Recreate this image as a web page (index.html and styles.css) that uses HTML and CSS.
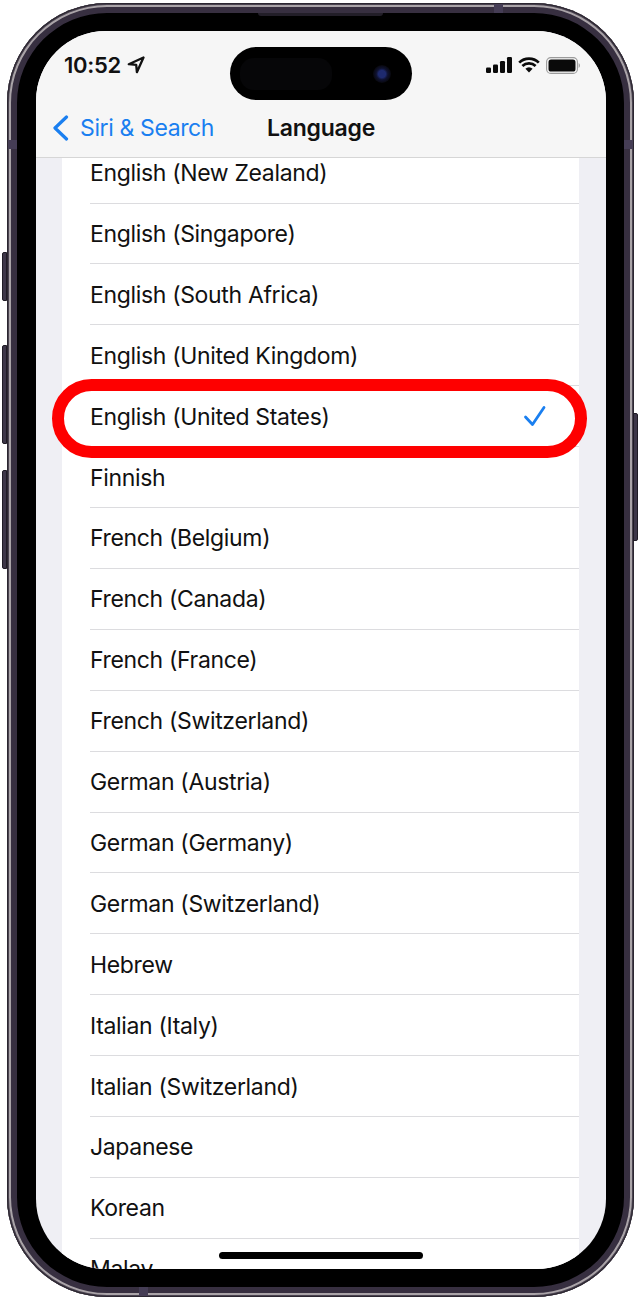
FILE: index.html
```html
<!DOCTYPE html>
<html lang="en">
<head>
<meta charset="utf-8">
<title>Language</title>
<link rel="stylesheet" href="styles.css">
</head>
<body>
<div class="phone">
  <span class="btn btn-silent"></span>
  <span class="btn btn-up"></span>
  <span class="btn btn-down"></span>
  <span class="btn btn-power"></span>
  <span class="speaker"></span>
  <span class="band band-top"></span>
  <span class="band band-bottom"></span>
  <span class="band band-left"></span>
  <span class="band band-right"></span>
  <div class="screen">
    <header class="header">
      <div class="status">
        <div class="status-left">
          <span class="time">10:52</span>
          <svg class="loc" width="18" height="18" viewBox="0 0 18 18"><path d="M16.500 1.500 1.800 8.200l7.400.6.7 7.400z" fill="none" stroke="#111" stroke-width="2.300" stroke-linejoin="round"/></svg>
        </div>
        <div class="status-right">
          <svg width="26" height="16" viewBox="0 0 26 16"><rect x="0" y="10.500" width="5" height="5.500" rx="1.200" fill="#0a0a0a"/><rect x="7" y="7.500" width="5" height="8.500" rx="1.200" fill="#0a0a0a"/><rect x="14" y="4" width="5" height="12" rx="1.200" fill="#0a0a0a"/><rect x="21" y="0" width="5" height="16" rx="1.200" fill="#0a0a0a"/></svg>
          <svg width="22" height="16" viewBox="0 0 22 16"><path d="M1.200 5.600a14 14 0 0 1 19.600 0M4.400 9a9.400 9.400 0 0 1 13.200 0" fill="none" stroke="#0a0a0a" stroke-width="2.700"/><path d="M7.400 11.800a5 5 0 0 1 7.200 0L11 15.600z" fill="#0a0a0a"/></svg>
          <svg width="34" height="17" viewBox="0 0 34 17"><rect x=".6" y=".6" width="30.800" height="15.800" rx="4.200" fill="none" stroke="#9b9b9b" stroke-width="1.100"/><rect x="2.500" y="2.500" width="27" height="12" rx="2.600" fill="#0a0a0a"/><path d="M32.600 6v5c.9-.4 1.400-1.400 1.400-2.500S33.500 6.400 32.600 6z" fill="#a5a5a5"/></svg>
        </div>
      </div>
      <nav class="nav">
        <a class="back">
          <svg width="17" height="26" viewBox="0 0 17 26"><path d="M13.500 2 2 13l11.500 11" fill="none" stroke="#1a7ff0" stroke-width="3.200" stroke-linecap="round" stroke-linejoin="round"/></svg>
          <span>Siri &amp; Search</span>
        </a>
        <h1 class="title">Language</h1>
        <span></span>
      </nav>
    </header>
    <div class="island"><span class="lens-dark"></span><span class="camera"></span></div>
    <main class="list">
      <ul class="card">
        <li class="row">English (New Zealand)</li>
        <li class="row">English (Singapore)</li>
        <li class="row">English (South Africa)</li>
        <li class="row">English (United Kingdom)</li>
        <li class="row">English (United States)
          <svg class="check" width="24" height="23" viewBox="0 0 24 23"><path d="M2.500 12 9.500 19.500 21 2.500" fill="none" stroke="#1a7ff0" stroke-width="2.800" stroke-linecap="round" stroke-linejoin="round"/></svg>
        </li>
        <li class="row">Finnish</li>
        <li class="row">French (Belgium)</li>
        <li class="row">French (Canada)</li>
        <li class="row">French (France)</li>
        <li class="row">French (Switzerland)</li>
        <li class="row">German (Austria)</li>
        <li class="row">German (Germany)</li>
        <li class="row">German (Switzerland)</li>
        <li class="row">Hebrew</li>
        <li class="row">Italian (Italy)</li>
        <li class="row">Italian (Switzerland)</li>
        <li class="row">Japanese</li>
        <li class="row">Korean</li>
        <li class="row">Malay</li>
      </ul>
    </main>
    <span class="home"></span>
  </div>
  <div class="ring"></div>
</div>
</body>
</html>
```
FILE: styles.css
```css
* { box-sizing: border-box; }
html, body { margin: 0; padding: 0; background: #fff; }
body {
  width: 642px;
  height: 1301px;
  overflow: hidden;
  padding: 3px 0 0 7px;
  font-family: Inter, "Liberation Sans", sans-serif;
  color: #111;
}
.phone {
  position: relative;
  width: 627px;
  height: 1294px;
  padding: 28px 28px 28px 29px;
  background: #000;
  border-radius: 100px;
  box-shadow:
    inset 0 0 0 1px #2b2630,
    inset 0 0 0 2px #4a4350,
    inset 0 0 0 4px #aaa4a8,
    inset 0 0 0 10px #372f40;
}
.btn {
  position: absolute;
  width: 5px;
  background: #3d3648;
  border: 1px solid #1f1b25;
  border-radius: 2px 0 0 2px;
}
.btn-silent { left: -5px; top: 249px; height: 49px; }
.btn-up { left: -5px; top: 342px; height: 99px; }
.btn-down { left: -5px; top: 467px; height: 99px; }
.btn-power { right: -4px; top: 410px; height: 128px; border-radius: 0 2px 2px 0; }
.speaker {
  position: absolute;
  left: 251px;
  top: 10px;
  width: 125px;
  height: 3px;
  background: #221e28;
  border-radius: 0 0 3px 3px;
}
.band { position: absolute; background: #453d55; }
.band-top { left: 487px; top: 1px; width: 9px; height: 9px; }
.band-bottom { left: 132px; bottom: 1px; width: 9px; height: 9px; }
.band-left { left: 1px; top: 137px; width: 9px; height: 9px; }
.band-right { right: 1px; top: 137px; width: 9px; height: 9px; }
.screen {
  position: relative;
  display: flex;
  flex-direction: column;
  width: 570px;
  height: 1238px;
  overflow: hidden;
  background: #efeff4;
  border-radius: 70px;
}
.header {
  flex: none;
  height: 127px;
  background: #f6f6f6;
  border-bottom: 1px solid #d6d6d6;
  position: relative;
  z-index: 1;
}
.status {
  display: flex;
  justify-content: space-between;
  align-items: center;
  height: 68px;
  padding: 0 26px 0 28px;
}
.status-left { display: flex; align-items: center; gap: 6px; }
.status-right { display: flex; align-items: center; gap: 6px; }
.time { font-size: 22px; font-weight: 600; letter-spacing: -.3px; color: #111; }
.nav {
  display: grid;
  grid-template-columns: 1fr auto 1fr;
  align-items: center;
  height: 58px;
  padding: 0 17px;
}
.back {
  display: flex;
  align-items: center;
  gap: 10px;
  color: #1a7ff0;
  font-size: 23px;
  letter-spacing: -.38px;
}
.title { margin: 0; font-size: 23px; font-weight: 600; letter-spacing: -.22px; color: #111; }
.island {
  position: absolute;
  z-index: 2;
  left: 194px;
  top: 16px;
  width: 182px;
  height: 53px;
  background: #000;
  border-radius: 27px;
}
.lens-dark {
  position: absolute;
  left: 10px;
  top: 11px;
  width: 92px;
  height: 32px;
  background: #060608;
  border-radius: 14px;
}
.camera {
  position: absolute;
  left: 143px;
  top: 18px;
  width: 18px;
  height: 18px;
  border-radius: 50%;
  background: radial-gradient(circle, #1e2a6e 0 28%, #0f1230 45%, #08080e 70%);
}
.list { flex: 1; min-height: 0; overflow: hidden; padding: 0 27px 0 26px; }
.card { list-style: none; margin: -15.300px 0 0; padding: 0 0 0 28px; background: #fff; }
.row {
  display: flex;
  justify-content: space-between;
  align-items: center;
  height: 60.900px;
  padding: 1px 32px 0 0;
  border-bottom: 1px solid #dcdcdf;
  font-size: 23px;
  letter-spacing: -.34px;
  color: #111;
}
.home {
  position: absolute;
  left: 183px;
  top: 1221px;
  width: 204px;
  height: 7px;
  background: #000;
  border-radius: 4px;
}
.ring {
  position: absolute;
  left: 45px;
  top: 376px;
  width: 535px;
  height: 79px;
  border: 12px solid #fe0000;
  border-radius: 40px;
}
```
